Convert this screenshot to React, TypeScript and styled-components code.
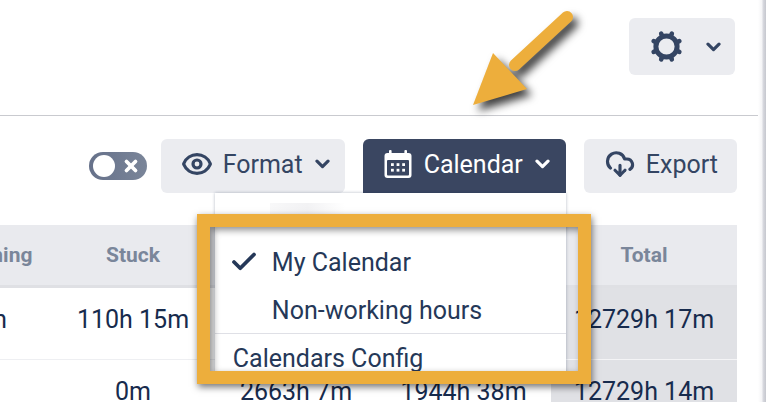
import React, { ReactNode } from "react";
import styled, { createGlobalStyle } from "styled-components";
import { Check, CloudDownload, Eye, X } from "lucide-react";

type Row = {
  lead: string;
  stuck: string;
  third: string;
  fourth: string;
  total: string;
};

const rows: Row[] = [
  { lead: "15m", stuck: "110h 15m", third: "", fourth: "", total: "12729h 17m" },
  { lead: "", stuck: "0m", third: "2663h 7m", fourth: "1944h 38m", total: "12729h 14m" },
];

const Chevron = ({ color = "#344563" }: { color?: string }) => (
  <svg width="15" height="10" viewBox="0 0 15 10" fill="none">
    <path d="M2 2.2 L7.5 7.6 L13 2.2" stroke={color} strokeWidth="3.2" strokeLinecap="round" strokeLinejoin="round" />
  </svg>
);

const GearIcon = () => (
  <svg width="33" height="33" viewBox="0 0 33 33" fill="none">
    <circle cx="16.5" cy="16.5" r="10.6" stroke="#344563" strokeWidth="5" />
    {[22.5, 67.5, 112.5, 157.5, 202.5, 247.5, 292.5, 337.5].map((angle) => (
      <line
        key={angle}
        x1="16.5"
        y1="5"
        x2="16.5"
        y2="2.6"
        stroke="#344563"
        strokeWidth="4.6"
        strokeLinecap="round"
        transform={`rotate(${angle} 16.5 16.5)`}
      />
    ))}
  </svg>
);

const CalendarIcon = () => (
  <svg width="28" height="28" viewBox="0 0 28 28">
    <rect x="0.5" y="3" width="27" height="25" rx="3" fill="#fff" />
    <rect x="5" y="0" width="2.6" height="5" rx="1" fill="#fff" />
    <rect x="20.4" y="0" width="2.6" height="5" rx="1" fill="#fff" />
    <rect x="3" y="10" width="22" height="15.5" rx="1" fill="#3a4661" />
    {[7, 12.6, 18.2].map((x) =>
      [13.2, 18.8].map((y) => <rect key={`${x}-${y}`} x={x} y={y} width="2.8" height="2.8" fill="#fff" />)
    )}
  </svg>
);

const Arrow = () => (
  <ArrowSvg width="120" height="110" viewBox="0 0 120 110">
    <path d="M97 12 L45 60" stroke="#edae3c" strokeWidth="12" strokeLinecap="round" />
    <polygon points="23,48 57,84 3,100" fill="#edae3c" />
  </ArrowSvg>
);

const Cell = ({ children, total }: { children?: ReactNode; total?: boolean }) => (
  <BodyCell $total={total}>{children}</BodyCell>
);

export default function App() {
  return (
    <Page>
      <GlobalStyle />
      <Main>
        <TopBar>
          <SettingsButton>
            <GearIcon />
            <Chevron />
          </SettingsButton>
        </TopBar>
        <Toolbar>
          <Toggle>
            <Knob />
            <X size={18} strokeWidth={5} color="#fff" />
          </Toggle>
          <FormatButton>
            <EyeIcon size={32} strokeWidth={2.4} color="#344563" />
            Format
            <Chevron />
          </FormatButton>
          <CalendarWrap>
            <CalendarButton $active>
              <CalendarIcon />
              Calendar
              <Chevron color="#fff" />
            </CalendarButton>
            <Menu>
              <Smudge />
              <MenuItem>
                <CheckSlot>
                  <Check size={30} strokeWidth={3} color="#253858" />
                </CheckSlot>
                My Calendar
              </MenuItem>
              <MenuItem>
                <CheckSlot />
                Non-working hours
              </MenuItem>
              <MenuLink>Calendars Config</MenuLink>
            </Menu>
          </CalendarWrap>
          <ExportButton>
            <CloudIcon size={30} strokeWidth={2.5} color="#344563" />
            Export
          </ExportButton>
        </Toolbar>
        <Table>
          <HeadRow>
            <HeadCell>Remaining</HeadCell>
            <HeadCell>Stuck</HeadCell>
            <HeadCell />
            <HeadCell />
            <HeadCell>Total</HeadCell>
          </HeadRow>
          {rows.map((row) => (
            <BodyRow key={row.total}>
              <Cell>{row.lead}</Cell>
              <Cell>{row.stuck}</Cell>
              <Cell>{row.third}</Cell>
              <Cell>{row.fourth}</Cell>
              <Cell total>{row.total}</Cell>
            </BodyRow>
          ))}
        </Table>
      </Main>
      <ScrollEdge />
      <Arrow />
      <Highlight />
    </Page>
  );
}

const GlobalStyle = createGlobalStyle`
  html, body {
    margin: 0;
    background: #fff;
  }
`;

const Page = styled.div`
  position: relative;
  display: flex;
  width: 766px;
  height: 402px;
  overflow: hidden;
  background: #fff;
  font-family: Roboto, "Liberation Sans", sans-serif;
  color: #172b4d;
`;

const Main = styled.div`
  width: 758px;
  flex: none;
`;

const ScrollEdge = styled.div`
  flex: 1;
  background: linear-gradient(90deg, #fff 0%, #f4f4f6 50%, #d9dae0 62%, #c5c7ce 100%);
`;

const TopBar = styled.div`
  display: flex;
  justify-content: flex-end;
  height: 97px;
  padding: 18px 23px 0 0;
  border-bottom: 1px solid #c9cacf;
`;

const SettingsButton = styled.div`
  display: flex;
  align-items: center;
  gap: 23px;
  box-sizing: border-box;
  width: 106px;
  height: 57px;
  padding-left: 21px;
  border-radius: 6px;
  background: #ebecf0;
`;

const Toolbar = styled.div`
  display: flex;
  justify-content: flex-end;
  align-items: center;
  gap: 18px;
  height: 54px;
  margin-top: 23px;
  padding-right: 21px;
`;

const Toggle = styled.div`
  display: flex;
  align-items: center;
  gap: 7px;
  box-sizing: border-box;
  width: 58px;
  height: 28px;
  margin-right: -4px;
  padding-left: 4px;
  border-radius: 14px;
  background: linear-gradient(90deg, #66718a, #7a8599);
`;

const Knob = styled.div`
  width: 22px;
  height: 22px;
  border-radius: 50%;
  background: #fff;
`;

const Button = styled.div<{ $active?: boolean }>`
  display: flex;
  align-items: center;
  gap: 12px;
  box-sizing: border-box;
  height: 54px;
  padding: 0 14px 4px 21px;
  border-radius: ${(p) => (p.$active ? "6px 6px 0 0" : "6px")};
  background: ${(p) => (p.$active ? "#3a4661" : "#ebecf0")};
  color: ${(p) => (p.$active ? "#fff" : "#344563")};
  font-size: 25px;
`;

const FormatButton = styled(Button)`
  padding-right: 15px;
`;

const CalendarButton = styled(Button)`
  padding-right: 16px;
`;

const ExportButton = styled(Button)`
  padding-right: 19px;
`;

const EyeIcon = styled(Eye)`
  margin: 0 -2px 0 -1px;
`;

const CloudIcon = styled(CloudDownload)`
  margin-right: -1px;
`;

const CalendarWrap = styled.div`
  position: relative;
`;

const Menu = styled.div`
  position: absolute;
  top: 100%;
  right: 0;
  z-index: 2;
  width: 351px;
  height: 187px;
  background: #fff;
  box-shadow: 0 0 3px rgba(9, 30, 66, 0.3);
  font-size: 25px;
  color: #253858;
`;

const Smudge = styled.div`
  width: 75px;
  height: 11px;
  margin: 10px 0 24px 55px;
  background: linear-gradient(90deg, #f8f8f9, #f2f2f4 50%, #fff);
`;

const MenuItem = styled.div`
  display: flex;
  align-items: center;
  height: 48px;
`;

const CheckSlot = styled.div`
  display: flex;
  justify-content: center;
  align-items: center;
  width: 57px;
  padding-left: 2px;
  box-sizing: border-box;
`;

const MenuLink = styled(MenuItem)`
  padding-left: 18px;
  border-top: 1px solid #dfe0e6;
  margin-top: -1px;
`;

const Table = styled.div`
  width: 823px;
  margin: 32px 0 0 -86px;
`;

const HeadRow = styled.div`
  display: grid;
  grid-template-columns: 136px 166px 160px 175px 186px;
  height: 60px;
  border-bottom: 3px solid #dfe0e4;
  background: #e9eaee;
`;

const HeadCell = styled.div`
  display: flex;
  justify-content: center;
  align-items: center;
  font-size: 21px;
  font-weight: 700;
  color: #7a869a;
`;

const BodyRow = styled.div`
  display: grid;
  grid-template-columns: 136px 166px 160px 175px 186px;
  height: 72px;
`;

const BodyCell = styled.div<{ $total?: boolean }>`
  box-sizing: border-box;
  padding-top: 17px;
  border-bottom: 1px solid ${(p) => (p.$total ? "#f4f4f6" : "#eeeff2")};
  background: ${(p) => (p.$total ? "#e0e1e5" : "#fff")};
  text-align: center;
  font-size: 25px;
  line-height: 30px;
  white-space: nowrap;
`;

const ArrowSvg = styled.svg`
  position: absolute;
  top: 5px;
  left: 470px;
  z-index: 3;
  overflow: visible;
  filter: drop-shadow(5px 6px 4px rgba(0, 0, 0, 0.75));
`;

const Highlight = styled.div`
  position: absolute;
  top: 214px;
  left: 197px;
  z-index: 3;
  box-sizing: border-box;
  width: 394px;
  height: 170px;
  border: 13px solid #edae3c;
  box-shadow: 1px 3px 7px rgba(0, 0, 0, 0.55), inset 3px 3px 7px rgba(0, 0, 0, 0.45);
`;
